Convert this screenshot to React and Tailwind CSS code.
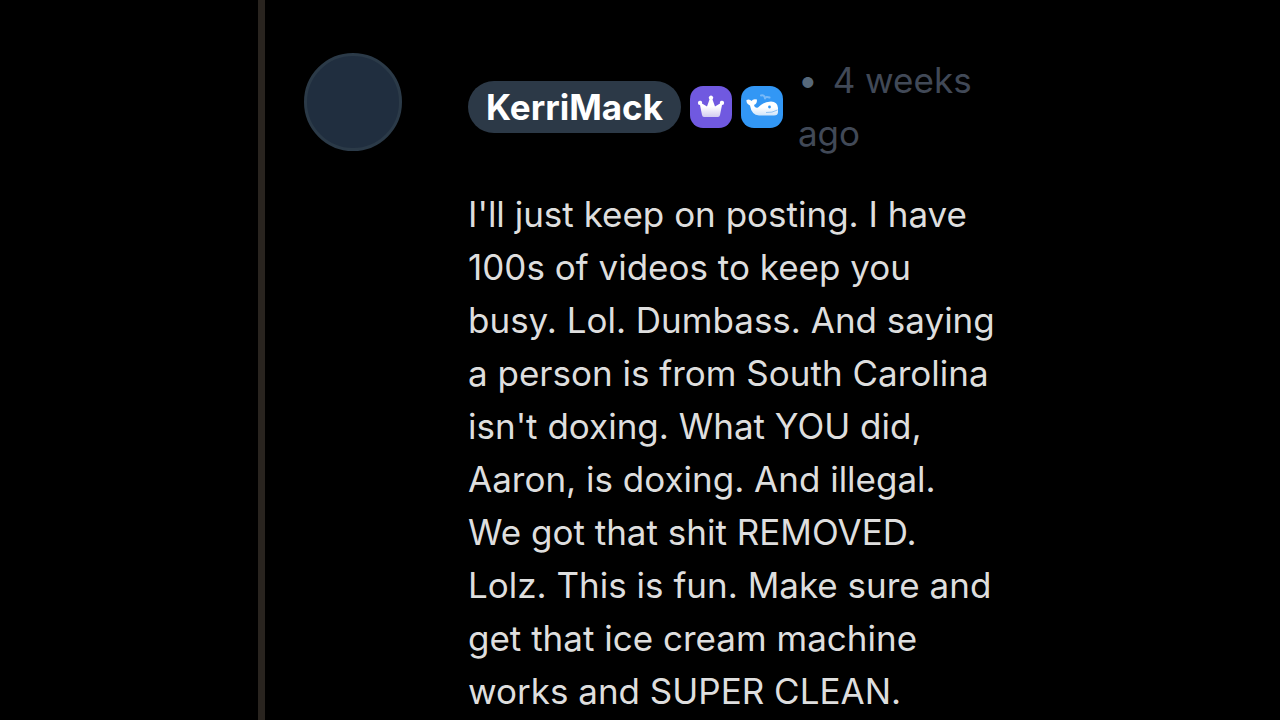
import React from 'react';

const comment = {
  author: 'KerriMack',
  lines: [
    "I'll just keep on posting. I have",
    '100s of videos to keep you',
    'busy. Lol. Dumbass. And saying',
    'a person is from South Carolina',
    "isn't doxing. What YOU did,",
    'Aaron, is doxing. And illegal.',
    'We got that shit REMOVED.',
    'Lolz. This is fun. Make sure and',
    'get that ice cream machine',
    'works and SUPER CLEAN.',
  ],
};

const CrownBadge = () => (
  <svg viewBox="0 0 42 42" className="size-[42px] shrink-0" role="img" aria-label="Crown">
    <defs>
      <linearGradient id="crown" x1="0" y1="0" x2="0" y2="1">
        <stop offset="0.5" stopColor="#ffffff" />
        <stop offset="1" stopColor="#d2ccf0" />
      </linearGradient>
    </defs>
    <rect width="42" height="42" rx="13" fill="#7059e0" />
    <path
      d="M12 29 L10 19 A2.1 2.1 0 1 1 12 17.5 L17 20.5 L19.5 13.5 A2.2 2.2 0 1 1 22.5 13.5 L25 20.5 L30 17.5 A2.1 2.1 0 1 1 32 19 L30 29 Q29.6 31 28 31 H14 Q12.4 31 12 29 Z"
      fill="url(#crown)"
    />
  </svg>
);

const WhaleBadge = () => (
  <svg viewBox="0 0 42 42" className="size-[42px] shrink-0" role="img" aria-label="Whale">
    <defs>
      <linearGradient id="whale" x1="0" y1="0" x2="0" y2="1">
        <stop offset="0.5" stopColor="#ffffff" />
        <stop offset="1" stopColor="#cfe4fa" />
      </linearGradient>
    </defs>
    <rect width="42" height="42" rx="13" fill="#3297f5" />
    <path
      d="M5.5 14 Q8.5 12.5 10.5 15 Q12 12.5 16 13.5 Q16 18 13 19 Q13.5 22.5 17 21.5 Q22.5 15.5 30 15.5 Q36.5 15.5 37 22 V26 Q37 29.5 33 29.5 H18 Q10.5 29 9 19.5 Q5 18 5.5 14 Z"
      fill="url(#whale)"
    />
    <path
      d="M24 12.5 Q23.5 8.5 20 9.5 M24 12.5 Q25 10 28.5 11.5"
      fill="none"
      stroke="#78b9f8"
      strokeWidth="2"
      strokeLinecap="round"
    />
    <circle cx="28.5" cy="21" r="1.4" fill="#3297f5" />
    <path d="M25 26.5 Q31 27 36.5 24" fill="none" stroke="#8fc2f4" strokeWidth="1" />
  </svg>
);

const Comment = ({ author, lines }) => (
  <article className="flex items-start gap-[66px]">
    <div className="mt-[53px] size-[98px] shrink-0 rounded-full border-3 border-[#2b3a48] bg-[#202e3f]" />
    <div className="min-w-0 flex-1">
      <header className="flex items-center pt-[54px]">
        <a
          href="#profile"
          className="flex h-[52px] items-center rounded-full bg-[#2c3947] px-[18px] text-[35px] font-bold text-white"
        >
          {author}
        </a>
        <div className="ml-[9px] flex gap-[9px]">
          <CrownBadge />
          <WhaleBadge />
        </div>
        <time className="ml-[15px] text-[35px] leading-[53px] text-[#414957]">
          <span className="mr-[15px] text-[#56687a]">•</span>4 weeks
          <br />
          ago
        </time>
      </header>
      <p className="mt-[28px] text-[35px] leading-[53px] whitespace-pre text-[#dedede]">
        {lines.join('\n')}
      </p>
    </div>
  </article>
);

const App = () => (
  <div className="h-screen overflow-hidden bg-black font-['Inter',sans-serif]">
    <main className="mx-auto min-h-screen w-full max-w-[764px] border-l-7 border-[#29241f] pl-[39px]">
      <Comment author={comment.author} lines={comment.lines} />
    </main>
  </div>
);

export default App;
